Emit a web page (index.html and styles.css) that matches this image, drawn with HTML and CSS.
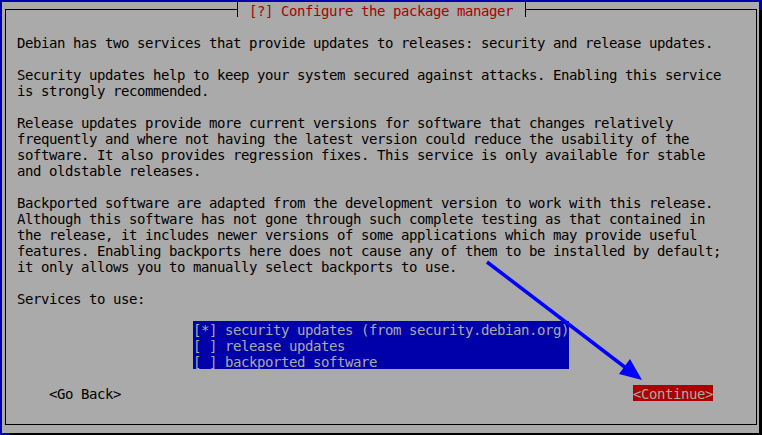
FILE: index.html
```html
<!DOCTYPE html>
<html lang="en">
<head>
<meta charset="utf-8">
<title>Configure the package manager</title>
<link rel="stylesheet" href="styles.css">
</head>
<body>
<div class="screen">
  <div class="dialog">
    <div class="frame">
      <div class="title">[?] Configure the package manager</div>
      <div class="intro">
        <p class="para">Debian has two services that provide updates to releases: security and release updates.</p>
        <p class="para">Security updates help to keep your system secured against attacks. Enabling this service<br>is strongly recommended.</p>
        <p class="para">Release updates provide more current versions for software that changes relatively<br>frequently and where not having the latest version could reduce the usability of the<br>software. It also provides regression fixes. This service is only available for stable<br>and oldstable releases.</p>
        <p class="para">Backported software are adapted from the development version to work with this release.<br>Although this software has not gone through such complete testing as that contained in<br>the release, it includes newer versions of some applications which may provide useful<br>features. Enabling backports here does not cause any of them to be installed by default;<br>it only allows you to manually select backports to use.</p>
        <p class="para">Services to use:</p>
      </div>
      <ul class="choices">
        <li class="choice">[*] security updates (from security.debian.org)</li>
        <li class="choice">[ ] release updates</li>
        <li class="choice">[ ] backported software</li>
      </ul>
      <div class="buttons">
        <span class="button">&lt;Go Back&gt;</span>
        <span class="button button-active">&lt;Continue&gt;</span>
      </div>
    </div>
  </div>
  <svg class="annotation" width="762" height="435" viewBox="0 0 762 435" aria-hidden="true">
    <line x1="487" y1="262" x2="626" y2="368" stroke="#0000ff" stroke-width="3.5"/>
    <polygon points="642,380 619,374 630,359" fill="#0000ff"/>
  </svg>
</div>
</body>
</html>
```

FILE: styles.css
```css
html, body {
  margin: 0;
  padding: 0;
}

body {
  width: 762px;
  height: 435px;
  overflow: hidden;
  background: #0000aa;
  font-family: "DejaVu Sans Mono", "Liberation Mono", monospace;
  font-size: 14px;
  letter-spacing: -0.43px;
  line-height: 16px;
  color: #000;
}

.screen {
  position: relative;
  width: 762px;
  height: 435px;
  padding: 2px 0 0 2px;
  box-sizing: border-box;
}

.dialog {
  width: 757px;
  height: 431px;
  box-sizing: border-box;
  padding: 7px 2px 8px 3px;
  background: #aaaaaa;
  box-shadow: 7px 8px 0 #000;
  display: flex;
}

.frame {
  position: relative;
  flex: 1;
  border: 1px solid #000;
  padding-top: 23px;
  display: flex;
  flex-direction: column;
}

.title {
  position: absolute;
  left: 231px;
  top: -8px;
  height: 15px;
  box-sizing: border-box;
  padding: 1px 12px 0 11px;
  border-left: 1px solid #000;
  border-right: 1px solid #000;
  background: #aaaaaa;
  color: #aa0000;
  white-space: pre;
}

.intro {
  margin-left: 11px;
  padding-top: 2px;
}

.para {
  margin: 0 0 16px;
  white-space: pre;
}

.para:last-child {
  margin-bottom: 0;
}

.choices {
  list-style: none;
  margin: 14px 0 0 187px;
  padding: 0;
  width: 376px;
  background: #0000aa;
  color: #aaaaaa;
}

.choice {
  height: 16px;
  box-sizing: border-box;
  padding-top: 2px;
  line-height: 14px;
  white-space: pre;
}

.buttons {
  margin-top: 16px;
  padding: 0 43px;
  display: flex;
  justify-content: space-between;
}

.button {
  height: 16px;
  box-sizing: border-box;
  padding-top: 2px;
  line-height: 14px;
  white-space: pre;
}

.button-active {
  background: #aa0000;
  color: #aaaaaa;
}

.annotation {
  position: absolute;
  left: 0;
  top: 0;
  pointer-events: none;
}
```
